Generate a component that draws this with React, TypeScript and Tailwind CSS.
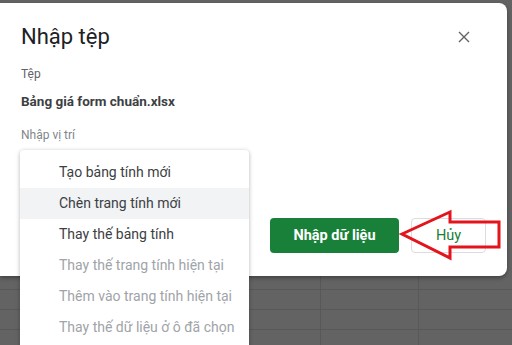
import React from "react";

const items = [
  { t: "Tạo bảng tính mới", on: true, hl: false },
  { t: "Chèn trang tính mới", on: true, hl: true },
  { t: "Thay thế bảng tính", on: true, hl: false },
  { t: "Thay thế trang tính hiện tại", on: false, hl: false },
  { t: "Thêm vào trang tính hiện tại", on: false, hl: false },
  { t: "Thay thế dữ liệu ở ô đã chọn", on: false, hl: false },
];

const rows = ["h-[14px]", "h-[20px]", "h-[20px]", "h-[20px]"];

export default function App() {
  return (
    <div className="relative w-[512px] h-[345px] overflow-hidden bg-[#636363] font-['Roboto','Liberation_Sans',sans-serif]">
      <div className="relative mt-[3px] mr-[5px] h-[273px] bg-white rounded-r-[8px] shadow-[0_2px_4px_rgba(0,0,0,0.35)] flex flex-col pl-[21px] pr-[21px] pt-[20px] pb-[23px]">
        <div className="flex items-start justify-between">
          <div className="text-[22px] leading-[28px] text-[#202124]">Nhập tệp</div>
          <svg className="mt-[8px] mr-[16px]" width="12" height="12" viewBox="0 0 12 12">
            <path d="M1 1L11 11M11 1L1 11" stroke="#5f6368" strokeWidth="1.4" />
          </svg>
        </div>
        <div className="mt-[15px] text-[12px] leading-[16px] text-[#5f6368]">Tệp</div>
        <div className="mt-[9px] text-[13.5px] leading-[20px] font-bold text-[#3c4043]">Bảng giá form chuẩn.xlsx</div>
        <div className="mt-[16px] text-[12px] leading-[16px] text-[#80868b]">Nhập vị trí</div>
        <div className="flex-1" />
        <div className="flex justify-end gap-[12px]">
          <div className="w-[129px] h-[35px] rounded-[4px] bg-[#188038] text-white text-[14.5px] font-bold flex items-center justify-center">
            Nhập dữ liệu
          </div>
          <div className="w-[75px] h-[35px] rounded-[4px] border border-[#dadce0] text-[#188038] text-[14.5px] font-normal flex items-center justify-center">
            Hủy
          </div>
        </div>
      </div>
      <div className="grid grid-cols-[321px_98px_1fr]">
        {rows.map((h, i) => (
          <React.Fragment key={i}>
            <div className={`${h} border-b border-r border-[#585858]`} />
            <div className={`${h} border-b border-r border-[#585858]`} />
            <div className={`${h} border-b border-[#585858]`} />
          </React.Fragment>
        ))}
      </div>
      <div className="absolute left-[20px] top-[150px] w-[229px] h-[210px] bg-white rounded-[4px] shadow-[0_1px_4px_rgba(0,0,0,0.3)] pt-[7px]">
        {items.map((it) => (
          <div
            key={it.t}
            className={`h-[31px] pl-[39px] flex items-center text-[14px] ${it.on ? "text-[#3c4043]" : "text-[#a0a4a8]"} ${it.hl ? "bg-[#f1f3f4]" : ""}`}
          >
            {it.t}
          </div>
        ))}
      </div>
      <svg className="absolute left-[398px] top-[208px]" width="106" height="54" viewBox="0 0 106 54">
        <polygon
          points="4,26 52,4 52,14 101,14 101,39 52,39 52,50"
          fill="none"
          stroke="#e3141b"
          strokeWidth="3"
          strokeLinejoin="miter"
        />
      </svg>
    </div>
  );
}
